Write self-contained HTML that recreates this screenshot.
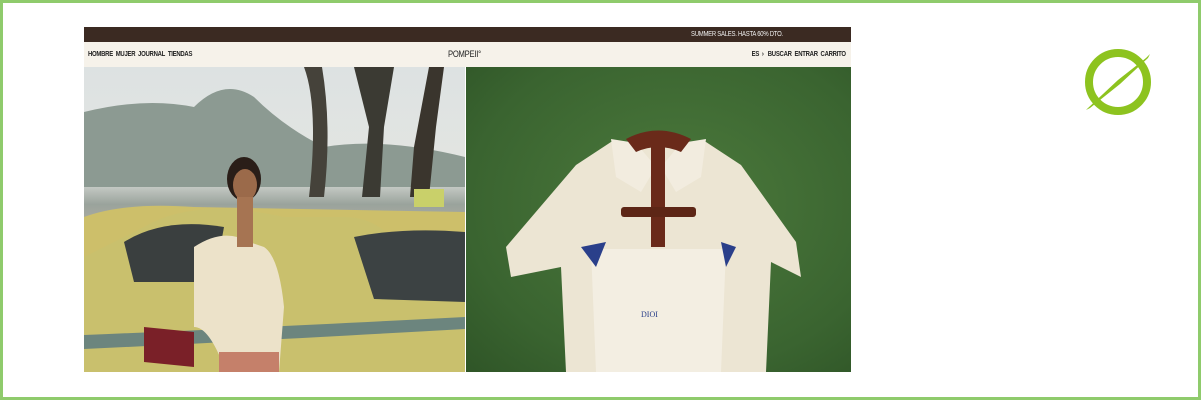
<!DOCTYPE html>
<html><head><meta charset="utf-8"><style>
*{margin:0;padding:0;box-sizing:border-box}
body{width:1201px;height:400px;background:#fff;position:relative;overflow:hidden;font-family:"Liberation Sans",sans-serif}
.frame{position:absolute;left:0;top:0;width:1201px;height:400px;border:3px solid #8fcb6c}
.top{position:absolute;left:84px;top:27px;width:767px;height:15px;background:#3b2a22;color:#eee;font-size:7px;line-height:15px;letter-spacing:-.3px}
.top span{position:absolute;left:607px;transform:scaleX(.85);transform-origin:left}
.nav{position:absolute;left:84px;top:42px;width:767px;height:25px;background:#f6f2ea;font-size:7px;font-weight:bold;color:#222;line-height:25px;letter-spacing:-.3px}
.nav span{position:absolute;transform:scaleX(.85)}
.nav .l{left:4px;transform-origin:left}.nav .r{right:5px;transform-origin:right}
.nav .c{left:364px;font-size:9px;font-weight:normal;transform-origin:left}
.left{position:absolute;left:84px;top:67px;width:381px;height:305px;overflow:hidden;background:linear-gradient(#dde2e2 0,#e3e5e1 35%,#9aa39c 45%,#b5b0a4 55%,#c9c08a 62%,#c8bb6a 100%)}
.right{position:absolute;left:466px;top:67px;width:385px;height:305px;background:radial-gradient(ellipse at 55% 45%,#4c7a3c,#3a6430 70%,#2f5527)}
</style></head><body>
<div class="frame"></div>
<div class="top"><span>SUMMER SALES. HASTA 60% DTO.</span></div>
<div class="nav"><span class="l">HOMBRE&nbsp; MUJER&nbsp; JOURNAL&nbsp; TIENDAS</span><span class="c">POMPEII°</span><span class="r">ES &nbsp;›&nbsp;&nbsp; BUSCAR&nbsp; ENTRAR&nbsp; CARRITO</span></div>
<div class="left">
<svg width="381" height="305" viewBox="0 0 381 305">
<path d="M0 45 Q60 30 110 40 Q140 10 170 30 Q200 60 240 80 Q300 70 381 90 V120 H0Z" fill="#8c9a92"/>
<path d="M270 0 L285 60 L278 130 L296 130 L300 60 L310 0Z" fill="#3b3a33"/>
<path d="M345 0 L330 80 L326 130 L345 130 L352 60 L360 0Z" fill="#3a352d"/>
<path d="M220 0 Q235 40 225 130 L240 130 Q248 60 238 0Z" fill="#45423a"/>
<path d="M0 150 Q40 135 110 140 L381 145 V305 H0Z" fill="#cdbf6a"/>
<path d="M60 160 Q110 130 200 150 L260 150 Q300 150 320 190 L381 200 V305 H0 V190Z" fill="#c9c06d"/>
<path d="M270 170 Q320 160 381 165 V235 L290 232Z" fill="#3c4243"/>
<path d="M40 175 Q80 150 140 160 L130 215 L50 215Z" fill="#3a3f3f"/>
<path d="M0 268 Q150 262 381 250 V262 Q150 275 0 282Z" fill="#2f5e8a" opacity=".6"/>
<path d="M60 260 L110 265 L110 300 L60 295Z" fill="#7a2028"/>
<path d="M110 180 Q140 160 165 175 L180 180 Q195 190 200 240 L195 305 H150 L140 300 Q125 260 110 260Z" fill="#ece2c9"/>
<ellipse cx="160" cy="112" rx="17" ry="22" fill="#2a1e18"/>
<ellipse cx="161" cy="118" rx="12" ry="16" fill="#9b6a4a"/>
<rect x="153" y="130" width="16" height="50" fill="#a67452"/>
<rect x="135" y="285" width="60" height="20" fill="#c5806a"/>
<rect x="330" y="122" width="30" height="18" fill="#c9d06a"/>
</svg></div>
<div class="right">
<svg width="385" height="305" viewBox="0 0 385 305">
<path d="M145 75 L110 98 L40 180 L45 210 L95 200 L100 305 H300 L305 195 L335 210 L330 175 L275 98 L240 75Z" fill="#ece5d3"/>
<path d="M145 72 L170 76 L190 100 L175 125 L150 110Z M240 72 L215 76 L195 100 L210 125 L235 110Z" fill="#f2ecdf"/>
<path d="M160 72 Q192 55 225 72 L215 85 Q192 75 170 85Z" fill="#6a2a1a"/>
<rect x="185" y="80" width="14" height="100" fill="#6a2a1a"/>
<rect x="155" y="140" width="75" height="10" rx="3" fill="#5d2616"/>
<path d="M125 182 L260 182 L255 305 H130Z" fill="#f3eee2"/>
<path d="M115 180 L140 175 L130 200Z M255 175 L270 180 L260 200Z" fill="#2a3f8a"/>
<text x="175" y="250" font-size="8" fill="#2a3f8a" font-family="Liberation Serif">DIOI</text>
</svg></div>
<svg style="position:absolute;left:1076px;top:40px" width="84" height="84" viewBox="0 0 84 84">
<circle cx="42" cy="42" r="29" fill="none" stroke="#8dc31f" stroke-width="8"/>
<path d="M74 14 L70 18 L42 40 L12 68 L10 70 L14 68 L44 44 L72 18Z" fill="#8dc31f"/>
</svg>
</body></html>
